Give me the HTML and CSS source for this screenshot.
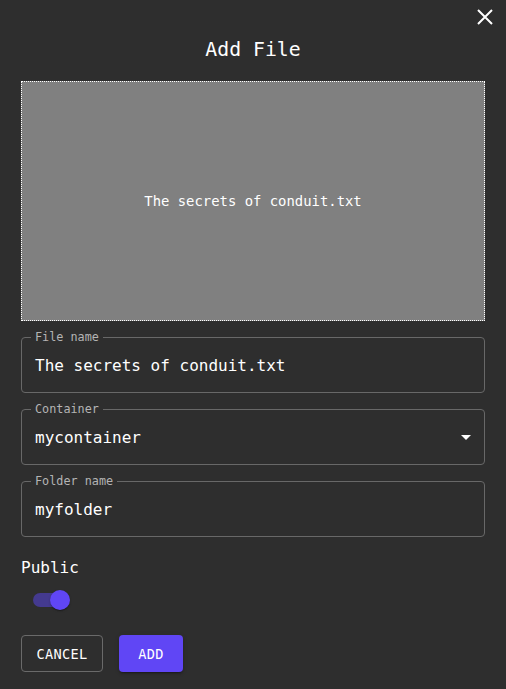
FILE: index.html
```html
<!DOCTYPE html>
<html>
<head>
<meta charset="utf-8">
<link rel="stylesheet" href="styles.css">
</head>
<body>
<div class="dialog">
  <button class="close" aria-label="close">
    <svg width="18" height="18" viewBox="0 0 18 18"><path d="M2 2 L16 16 M16 2 L2 16" stroke="#fff" stroke-width="2" fill="none"/></svg>
  </button>
  <h2 class="title">Add File</h2>
  <div class="preview">The secrets of conduit.txt</div>
  <div class="fields">
    <div class="field">
      <span class="label">File name</span>
      <div class="value">The secrets of conduit.txt</div>
    </div>
    <div class="field">
      <span class="label">Container</span>
      <div class="value">mycontainer</div>
      <svg class="caret" width="12" height="6" viewBox="0 0 12 6"><path d="M1 0 L11 0 L6 5 Z" fill="#fff"/></svg>
    </div>
    <div class="field">
      <span class="label">Folder name</span>
      <div class="value">myfolder</div>
    </div>
  </div>
  <div class="public">Public</div>
  <div class="switch">
    <span class="track"></span>
    <span class="thumb"></span>
  </div>
  <div class="actions">
    <button class="btn cancel">CANCEL</button>
    <button class="btn add">ADD</button>
  </div>
</div>
</body>
</html>
```
FILE: styles.css
```css
html, body {
  margin: 0;
  padding: 0;
  background: #2e2e2e;
  height: 100%;
}
body {
  font-family: "DejaVu Sans Mono", "Liberation Mono", monospace;
  color: #fff;
}
.dialog {
  position: relative;
  padding: 0 21px;
}
.close {
  position: absolute;
  top: 8px;
  right: 12px;
  background: none;
  border: 0;
  padding: 0;
  width: 18px;
  height: 18px;
  cursor: pointer;
}
.close svg { display: block; }
.title {
  margin: 0;
  padding-top: 38px;
  height: 23px;
  font-size: 19.8px;
  line-height: 24px;
  font-weight: 500;
  text-align: center;
}
.preview {
  margin-top: 20px;
  height: 238px;
  background: #808080;
  border: 1px dotted #ffffff;
  display: flex;
  align-items: center;
  justify-content: center;
  font-size: 13.9px;
}
.fields {
  margin-top: 16px;
  display: flex;
  flex-direction: column;
  gap: 16px;
}
.field {
  position: relative;
  height: 54px;
  border: 1px solid #686868;
  border-radius: 4px;
  display: flex;
  align-items: center;
  padding: 0 13px;
}
.label {
  position: absolute;
  top: -8px;
  left: 9px;
  padding: 0 4px;
  background: #2e2e2e;
  color: #b4b4b4;
  font-size: 11.8px;
  line-height: 14px;
}
.value {
  font-size: 16px;
  line-height: 20px;
  padding-top: 1px;
}
.caret {
  position: absolute;
  right: 12px;
  top: 25px;
}
.public {
  margin-top: 19px;
  font-size: 16px;
  line-height: 24px;
}
.switch {
  position: relative;
  margin-top: 1px;
  width: 58px;
  height: 38px;
}
.track {
  position: absolute;
  left: 12px;
  top: 12px;
  width: 34px;
  height: 14px;
  border-radius: 7px;
  background: #5a45f0;
  opacity: 0.5;
}
.thumb {
  position: absolute;
  left: 29px;
  top: 9px;
  width: 20px;
  height: 20px;
  border-radius: 50%;
  background: #6046f5;
  box-shadow: 0 2px 1px -1px rgba(0,0,0,.2), 0 1px 1px rgba(0,0,0,.14), 0 1px 3px rgba(0,0,0,.12);
}
.actions {
  margin-top: 16px;
  display: flex;
  gap: 16px;
}
.btn {
  font-family: inherit;
  font-size: 13.6px;
  font-weight: 500;
  letter-spacing: 0.3px;
  height: 37px;
  border-radius: 4px;
  color: #fff;
  cursor: pointer;
}
.cancel {
  width: 82px;
  background: transparent;
  border: 1px solid #6a6a6a;
}
.add {
  width: 64px;
  background: #6046f5;
  border: 0;
  box-shadow: 0 3px 1px -2px rgba(0,0,0,.2), 0 2px 2px rgba(0,0,0,.14), 0 1px 5px rgba(0,0,0,.12);
}
```
